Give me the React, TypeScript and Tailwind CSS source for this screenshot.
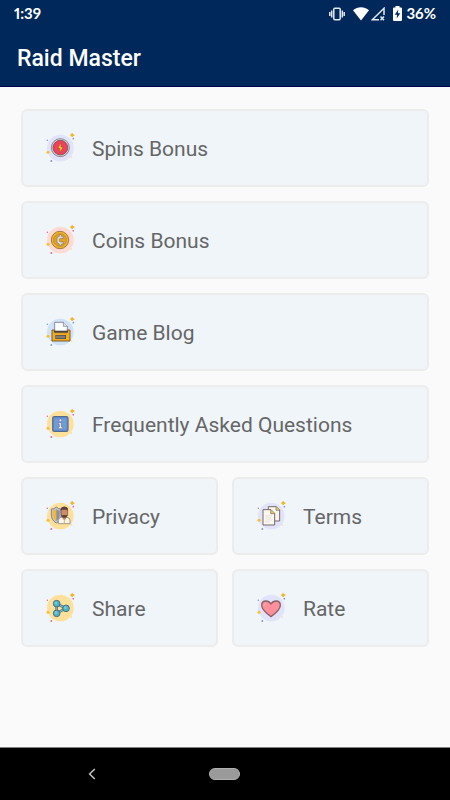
import type { ReactNode } from "react";

export default function App() {
  return (
    <div className="flex flex-col min-h-screen bg-[#fafafa] font-[Roboto,sans-serif]">
      <header className="bg-[#00285a] border-b border-[#000050] text-white">
        <StatusBar />
        <h1 className="flex items-center h-[59px] px-[17px] pt-1.5 text-[23px] font-medium">Raid Master</h1>
      </header>

      <main className="flex-1 grid grid-cols-2 content-start gap-[14px] px-[21px] py-[22px]">
        <MenuCard wide href="#spins" label="Spins Bonus" icon={<SpinsIcon />} />
        <MenuCard wide href="#coins" label="Coins Bonus" icon={<CoinsIcon />} />
        <MenuCard wide href="#blog" label="Game Blog" icon={<BlogIcon />} />
        <MenuCard wide href="#faq" label="Frequently Asked Questions" icon={<FaqIcon />} />
        <MenuCard href="#privacy" label="Privacy" icon={<PrivacyIcon />} />
        <MenuCard href="#terms" label="Terms" icon={<TermsIcon />} />
        <MenuCard href="#share" label="Share" icon={<ShareIcon />} />
        <MenuCard href="#rate" label="Rate" icon={<RateIcon />} />
      </main>

      <NavigationBar />
    </div>
  );
}

function StatusBar() {
  return (
    <div className="flex items-center justify-between h-[27px] px-[14px] font-[Lato,sans-serif] text-[15px] font-bold proportional-nums">
      <span>1:39</span>
      <div className="flex items-center">
        {/* Vibrate */}
        <svg width="16" height="14" viewBox="0 0 16 14" fill="none" stroke="#e3e8ef" strokeWidth="1.5" className="mr-2">
          <rect x="4.8" y="1.2" width="6.4" height="11.6" rx="1" />
          <path d="M2.7 3.5v7M.8 5v4M13.3 3.5v7M15.2 5v4" />
        </svg>
        {/* Wifi */}
        <svg width="16" height="14" viewBox="0 0 16 14" fill="#fff" className="mr-0.5">
          <path d="M0 3.2C4.6-.8 11.4-.8 16 3.2L8 13.5z" />
        </svg>
        {/* Mobile signal, no data */}
        <svg width="14" height="14" viewBox="0 0 14 14" fill="none" stroke="#e3e8ef" strokeWidth="1.5" className="mr-2">
          <path d="M13 8V1.3L1.3 12.7H8M9.5 9.5l3.5 3.7M13 9.5l-3.5 3.7" />
        </svg>
        {/* Battery */}
        <svg width="9" height="15" viewBox="0 0 9 15" className="mr-1">
          <path d="M2.5 0h4v1.5H8q1 0 1 1V14q0 1-1 1H1q-1 0-1-1V2.5q0-1 1-1h1.5z" fill="#fff" />
          <path d="M5.3 3.5 1.8 8.7h2.3l-.4 3.8 3.6-5.2H4.9z" fill="#00285a" />
        </svg>
        <span>36%</span>
      </div>
    </div>
  );
}

function MenuCard({ href, label, icon, wide }: { href: string; label: string; icon: ReactNode; wide?: boolean }) {
  return (
    <a
      href={href}
      className={`flex items-center gap-3 h-[78px] pl-[17px] rounded-md border-2 border-[#ececec] bg-[#f0f5fa] text-[21px] leading-8 text-[#666] ${wide ? "col-span-2" : ""}`}
    >
      {icon}
      <span className="pt-0.5">{label}</span>
    </a>
  );
}

function NavigationBar() {
  return (
    <nav className="grid grid-cols-3 items-center justify-items-center h-[53px] px-[25px] border-t border-[#808080] bg-black">
      <button type="button" aria-label="Back">
        <svg width="8" height="12" viewBox="0 0 8 12" fill="none" stroke="#c4c4c4" strokeWidth="1.5">
          <path d="M6.8 1 1.6 6l5.2 5" />
        </svg>
      </button>
      <button type="button" aria-label="Home" className="w-[31px] h-[12px] rounded-full bg-[#9a9a9a] border border-[#b0b0b0]" />
    </nav>
  );
}

// Round backdrop with the little confetti dots around it
function IconFrame({ color, accent, children }: { color: string; accent: string; children: ReactNode }) {
  return (
    <svg width="40" height="40" viewBox="0 0 120 120" className="shrink-0" aria-hidden="true">
      <circle cx="61" cy="60" r="40" fill={color} />
      <path d="M91 19h3v-3h5v3h4v5h-4v3h-5v-3h-3z" fill="#f0b72a" />
      <circle cx="24" cy="73" r="4.5" fill="#fbbd2c" />
      <circle cx="94" cy="87" r="2.5" fill="#f9d793" />
      <circle cx="100" cy="32" r="2.5" fill={accent} />
      <circle cx="34" cy="99" r="2.8" fill={accent} />
      <circle cx="22" cy="37" r="2.3" fill={accent} />
      {children}
    </svg>
  );
}

function SpinsIcon() {
  return (
    <IconFrame color="#e0e3fa" accent="#8790c0">
      <circle cx="61" cy="59" r="27" fill="#d9dce0" stroke="#77717a" strokeWidth="2.5" />
      <circle cx="61" cy="59" r="22" fill="#f3405a" stroke="#814654" strokeWidth="2.5" />
      <path d="m63 43-10 18h6v14l11-18h-7z" fill="#ffc02e" stroke="#94553f" strokeWidth="2" />
    </IconFrame>
  );
}

function CoinsIcon() {
  return (
    <IconFrame color="#ffd9d2" accent="#ed6687">
      <circle cx="60" cy="60" r="26" fill="#f2b52b" stroke="#a17d46" strokeWidth="3" />
      <circle cx="60" cy="60" r="19" fill="#dfa126" stroke="#b5852c" strokeWidth="2" />
      <path d="M70 55v-6h-6v-5h-6v5q-7 1-7 8v7q0 7 7 8v5h6v-5h6v-6h-8q-4 0-4-4v-4q0-3 4-3z" fill="#e4e2e0" stroke="#8b7a6c" strokeWidth="2" />
    </IconFrame>
  );
}

function BlogIcon() {
  return (
    <IconFrame color="#cfe2f7" accent="#769bd8">
      <path d="M44 57V31h26l12 12v14z" fill="#fff" stroke="#77767d" strokeWidth="2.5" />
      <path d="M70 31v12h12" fill="#dfe3e8" stroke="#77767d" strokeWidth="2" />
      <path d="M36 54h8v8h38v-8h8v33H36z" fill="#f0ae1e" stroke="#805a28" strokeWidth="3" />
      <rect x="46" y="69" width="32" height="12" fill="#5d5252" />
      <path d="M49 73h26M49 77h26" stroke="#c8bcad" strokeWidth="2" strokeDasharray="4 2" />
      <path d="M42 59h42" stroke="#4d403a" strokeWidth="4" />
    </IconFrame>
  );
}

function FaqIcon() {
  return (
    <IconFrame color="#ffe09a" accent="#ed6687">
      <rect x="38" y="38" width="46" height="44" rx="5" fill="#658fcd" stroke="#536b94" strokeWidth="3.5" />
      <rect x="43" y="43" width="36" height="34" fill="#6f9bda" />
      <circle cx="61" cy="49" r="4" fill="#f6efe3" stroke="#56617b" strokeWidth="1.5" />
      <path d="M55 56h9v13h4v5H55v-5h3v-8h-3z" fill="#f6efe3" stroke="#56617b" strokeWidth="1.5" />
    </IconFrame>
  );
}

function PrivacyIcon() {
  return (
    <IconFrame color="#ffe09a" accent="#ed6687">
      <path d="M49 33q-7 7-15 6v18q0 16 15 24 15-8 15-24V39q-8 1-15-6z" fill="#c4c4c8" stroke="#77727a" strokeWidth="2.5" />
      <path d="M49 40q-5 4-10 4v14q0 11 10 17z" fill="#f6b82b" />
      <path d="M49 40q5 4 10 4v14q0 11-10 17z" fill="#8d9099" />
      <path d="M55 83V73q0-8 10-9h16q9 1 9 9v10z" fill="#f9f5ef" stroke="#77706c" strokeWidth="2" />
      <path d="M68 63v6l5 4 5-4v-6z" fill="#cd8c65" />
      <path d="M73 72v10" stroke="#e8b443" strokeWidth="3" />
      <path d="M63 42q0-9 10-9t10 9v13q0 9-10 9t-10-9z" fill="#c98e6c" stroke="#65463c" strokeWidth="2" />
      <path d="M62 44q-1-12 11-12t11 12l-4-3H67zM64 56l4 2q5-2 10 0l4-2q0 9-9 9t-9-9z" fill="#5d4038" />
    </IconFrame>
  );
}

function TermsIcon() {
  return (
    <IconFrame color="#e0e3fa" accent="#8790c0">
      <path d="M52 32h24l10 10v33H52z" fill="#f8f5ee" stroke="#796867" strokeWidth="3" />
      <path d="M75 32v11h11" fill="#efc851" stroke="#796867" strokeWidth="2" />
      <path d="M36 41h24l11 11v35H36z" fill="#fbf8f1" stroke="#796867" strokeWidth="3" />
      <path d="M59 41v12h12" fill="#efc851" stroke="#796867" strokeWidth="2" />
      <path d="M43 60h20M43 66h17M43 72h20M43 78h12" stroke="#e3dbd0" strokeWidth="2.5" />
    </IconFrame>
  );
}

function ShareIcon() {
  return (
    <IconFrame color="#ffe09a" accent="#ed6687">
      <path d="M50 47v29l27-15z" fill="none" stroke="#58747c" strokeWidth="8" />
      <path d="M50 47v29l27-15z" fill="none" stroke="#a9c0c3" strokeWidth="3" />
      <g fill="#4cb4ca" stroke="#47717e" strokeWidth="3">
        <circle cx="50" cy="47" r="10" />
        <circle cx="50" cy="76" r="10" />
        <circle cx="78" cy="61" r="10" />
      </g>
      <g fill="#75cbdc">
        <circle cx="48" cy="45" r="4" />
        <circle cx="48" cy="74" r="4" />
        <circle cx="76" cy="59" r="4" />
      </g>
    </IconFrame>
  );
}

function RateIcon() {
  return (
    <IconFrame color="#e0e3fa" accent="#8790c0">
      <path
        d="M60 86Q32 66 32 52q0-13 13-13 9 0 15 9 6-9 15-9 13 0 13 13 0 14-28 34z"
        fill="#ff8f98"
        stroke="#8b6069"
        strokeWidth="4"
        strokeLinejoin="round"
      />
      <path d="M39 53q0-7 7-7" fill="none" stroke="#ffb5ba" strokeWidth="3" strokeLinecap="round" />
    </IconFrame>
  );
}
